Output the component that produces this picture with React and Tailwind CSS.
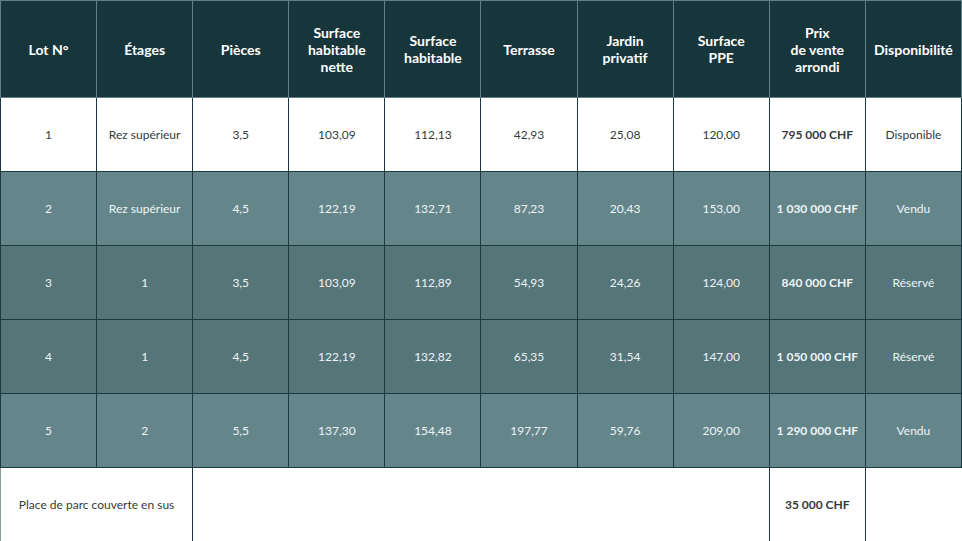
import React from 'react';

const headers = [
  ['Lot N°'],
  ['Étages'],
  ['Pièces'],
  ['Surface', 'habitable', 'nette'],
  ['Surface', 'habitable'],
  ['Terrasse'],
  ['Jardin', 'privatif'],
  ['Surface', 'PPE'],
  ['Prix', 'de vente', 'arrondi'],
  ['Disponibilité'],
];

const rows = [
  { bg: 'bg-white text-[#333b3d]', cells: ['1', 'Rez supérieur', '3,5', '103,09', '112,13', '42,93', '25,08', '120,00', '795 000 CHF', 'Disponible'] },
  { bg: 'bg-[#64868b] text-[#eef4f5]', cells: ['2', 'Rez supérieur', '4,5', '122,19', '132,71', '87,23', '20,43', '153,00', '1 030 000 CHF', 'Vendu'] },
  { bg: 'bg-[#567579] text-[#eef4f5]', cells: ['3', '1', '3,5', '103,09', '112,89', '54,93', '24,26', '124,00', '840 000 CHF', 'Réservé'] },
  { bg: 'bg-[#567579] text-[#eef4f5]', cells: ['4', '1', '4,5', '122,19', '132,82', '65,35', '31,54', '147,00', '1 050 000 CHF', 'Réservé'] },
  { bg: 'bg-[#64868b] text-[#eef4f5]', cells: ['5', '2', '5,5', '137,30', '154,48', '197,77', '59,76', '209,00', '1 290 000 CHF', 'Vendu'] },
];

const App = () => {
  return (
    <div className="w-[962px] h-[541px] bg-white font-['Lato',sans-serif] overflow-hidden">
      <table className="w-full h-full table-fixed border-collapse text-center">
        <thead>
          <tr className="h-[97px] bg-[#17363b] text-white">
            {headers.map((h, i) => (
              <th key={i} className="border border-[#5f8085] text-[14px] font-bold leading-[17px] px-0">
                {h.map((line, j) => (
                  <div key={j}>{line}</div>
                ))}
              </th>
            ))}
          </tr>
        </thead>
        <tbody>
          {rows.map((row, r) => (
            <tr key={r} className={`h-[74px] ${row.bg}`}>
              {row.cells.map((c, i) => (
                <td
                  key={i}
                  className={`border-[1.5px] border-[#1b3a3f] text-[12px] ${i === 8 ? 'font-bold' : ''}`}
                >
                  {c}
                </td>
              ))}
            </tr>
          ))}
          <tr className="h-[74px] bg-white text-[#333b3d]">
            <td colSpan={2} className="border-[1.5px] border-[#1b3a3f] border-l-[#8a9a9c] border-b-[#8a9a9c] text-[12px]">
              Place de parc couverte en sus
            </td>
            <td colSpan={6} className="border-[1.5px] border-[#1b3a3f] border-b-[#8a9a9c]"></td>
            <td className="border-[1.5px] border-[#1b3a3f] border-b-[#8a9a9c] text-[12px] font-bold">35 000 CHF</td>
            <td className="border-[1.5px] border-[#1b3a3f] border-r-0 border-b-[#8a9a9c]"></td>
          </tr>
        </tbody>
      </table>
    </div>
  );
};

export default App;
